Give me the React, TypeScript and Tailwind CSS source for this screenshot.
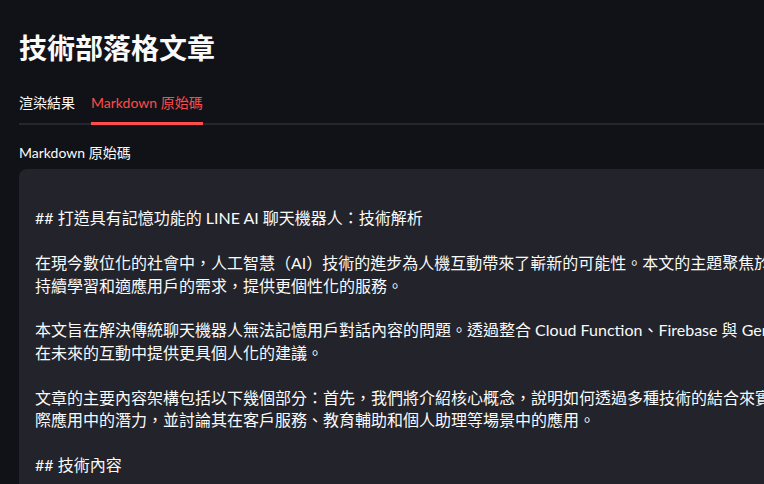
const sans = "font-['Lato','Noto_Sans_CJK_TC',sans-serif]";

const markdown = [
  "",
  "## 打造具有記憶功能的 LINE AI 聊天機器人：技術解析",
  "",
  "在現今數位化的社會中，人工智慧（AI）技術的進步為人機互動帶來了嶄新的可能性。本文的主題聚焦於打造一個具有記憶功能的 LINE AI 聊天機器人，使其能夠",
  "持續學習和適應用戶的需求，提供更個性化的服務。",
  "",
  "本文旨在解決傳統聊天機器人無法記憶用戶對話內容的問題。透過整合 Cloud Function、Firebase 與 Gemini API，機器人能夠記住用戶的偏好，並",
  "在未來的互動中提供更具個人化的建議。",
  "",
  "文章的主要內容架構包括以下幾個部分：首先，我們將介紹核心概念，說明如何透過多種技術的結合來實現記憶功能；接著探討此技術在實",
  "際應用中的潛力，並討論其在客戶服務、教育輔助和個人助理等場景中的應用。",
  "",
  "## 技術內容",
  "",
].join("\n");

const tabs = ["渲染結果", "Markdown 原始碼"];

export default function App() {
  const active = 1;
  return (
    <div className={`h-screen w-full overflow-hidden bg-[#111217] text-[#fafafa] ${sans}`}>
      <div className="w-[1100px] pl-[19px] pt-[31px]">
        <h1 className="text-[28px] font-bold leading-[34px]">技術部落格文章</h1>

        <div className="mt-[28px] flex gap-4 border-b-2 border-[#26272e]">
          {tabs.map((t, i) => (
            <button
              key={t}
              className={`-mb-[2px] border-b-[3px] pb-[9px] text-[14px] leading-5 ${
                i === active ? "border-[#ff4b4b] text-[#ff4b4b]" : "border-transparent text-[#fafafa]"
              }`}
            >
              {t}
            </button>
          ))}
        </div>

        <div className="mt-[18px] text-[14px] leading-5">Markdown 原始碼</div>

        <div className="mt-[6px] h-[400px] w-[1000px] whitespace-pre rounded-lg bg-[#23242b] p-4 text-[16px] leading-[22.4px] text-[#fafafa]">
          {markdown}
        </div>
      </div>
    </div>
  );
}
